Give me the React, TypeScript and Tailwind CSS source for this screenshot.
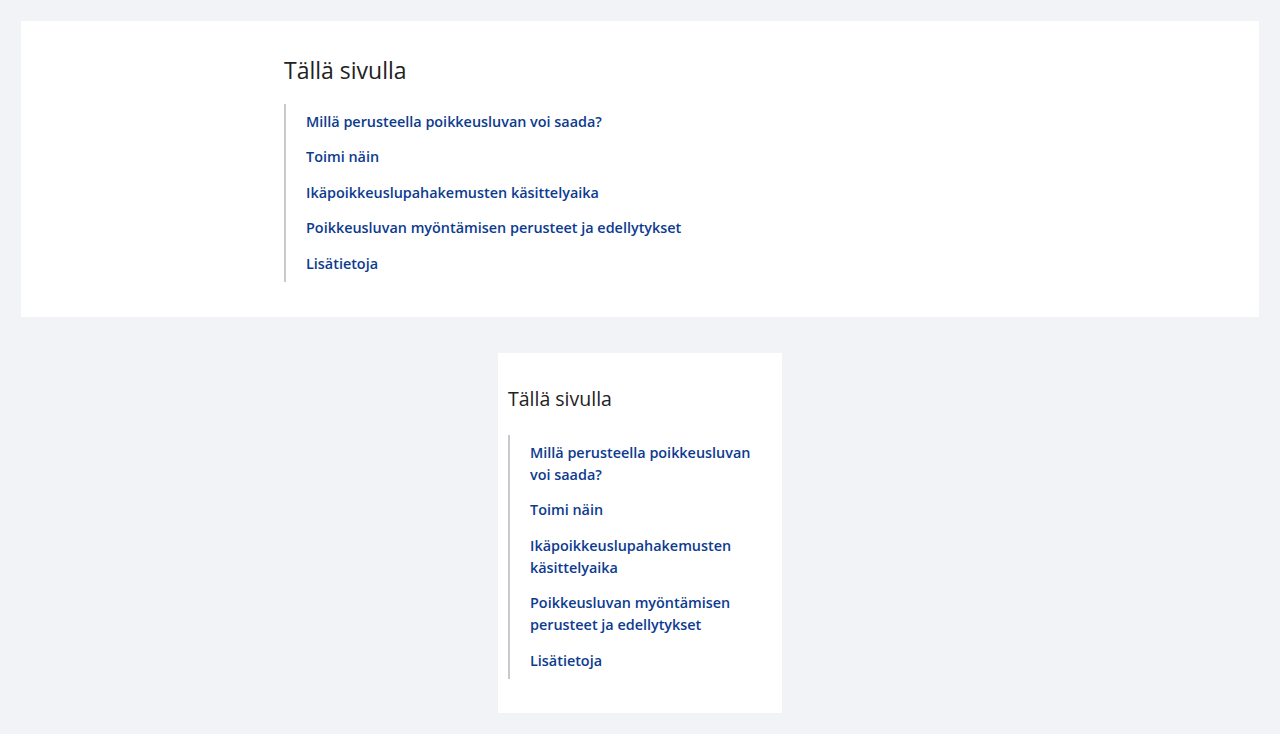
const links = [
  "Millä perusteella poikkeusluvan voi saada?",
  "Toimi näin",
  "Ikäpoikkeuslupahakemusten käsittelyaika",
  "Poikkeusluvan myöntämisen perusteet ja edellytykset",
  "Lisätietoja",
];

const Toc = ({ small }: { small?: boolean }) => (
  <nav>
    <h2
      className={
        small
          ? "text-[19.5px] leading-[26px] text-[#222] font-['Open_Sans',sans-serif] mb-[23px]"
          : "text-[23px] leading-[28px] text-[#222] font-['Open_Sans',sans-serif] mb-[20px]"
      }
    >
      Tällä sivulla
    </h2>
    <ul className="border-l-2 border-[#c8c9cc]">
      {links.map((l) => (
        <li key={l} className="pl-[20px] pr-[10px] py-[6.75px] text-[14.4px] leading-[22px]">
          <a href="#" className="font-semibold text-[#0c3b8f] font-['Open_Sans',sans-serif]">
            {l}
          </a>
        </li>
      ))}
    </ul>
  </nav>
);

export default function App() {
  return (
    <div className="min-h-[734px] bg-[#f2f3f7] p-[21px] flex flex-col items-center gap-[36px]">
      {/* Wide layout */}
      <section className="w-full bg-white pt-[35px] pb-[35.5px] pl-[263px]">
        <Toc />
      </section>

      {/* Narrow layout */}
      <section className="w-[284px] bg-white pt-[33px] pb-[34px] pl-[10px]">
        <Toc small />
      </section>
    </div>
  );
}
